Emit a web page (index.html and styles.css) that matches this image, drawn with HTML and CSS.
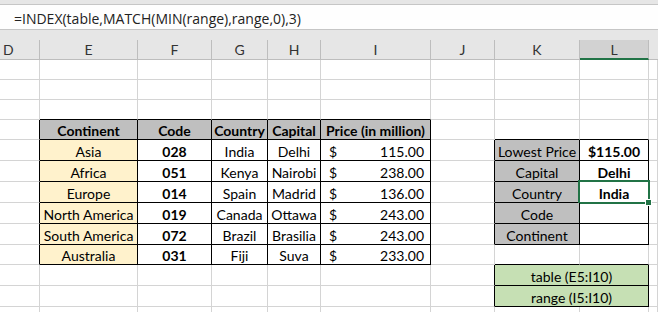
FILE: index.html
```html
<!DOCTYPE html>
<html>
<head>
<meta charset="utf-8">
<link rel="stylesheet" href="styles.css">
</head>
<body>
<div class="app">
  <div class="topbar">
    <div class="fbar"><span class="fx">=INDEX(table,MATCH(MIN(range),range,0),3)</span></div>
  </div>
  <div class="sheet">
    <div class="h hd">D</div><div class="h">E</div><div class="h">F</div><div class="h">G</div><div class="h">H</div><div class="h">I</div><div class="h">J</div><div class="h">K</div><div class="h hsel">L</div><div class="h hlast"></div>

    <div class="c"></div><div class="c"></div><div class="c"></div><div class="c"></div><div class="c"></div><div class="c"></div><div class="c"></div><div class="c"></div><div class="c"></div><div class="c"></div>
    <div class="c"></div><div class="c"></div><div class="c"></div><div class="c"></div><div class="c"></div><div class="c"></div><div class="c"></div><div class="c"></div><div class="c"></div><div class="c"></div>
    <div class="c"></div><div class="c bb"></div><div class="c bb"></div><div class="c bb"></div><div class="c bb"></div><div class="c bb"></div><div class="c"></div><div class="c"></div><div class="c"></div><div class="c"></div>

    <div class="c br"></div><div class="c t th">Continent</div><div class="c t th">Code</div><div class="c t th">Country</div><div class="c t th">Capital</div><div class="c t th">Price (in million)</div><div class="c"></div><div class="c bb"></div><div class="c bb"></div><div class="c"></div>

    <div class="c br"></div><div class="c t ct">Asia</div><div class="c t b">028</div><div class="c t">India</div><div class="c t">Delhi</div><div class="c t pr"><span>$</span><span>115.00</span></div><div class="c br"></div><div class="c t lab">Lowest Price</div><div class="c t b">$115.00</div><div class="c"></div>

    <div class="c br"></div><div class="c t ct">Africa</div><div class="c t b">051</div><div class="c t">Kenya</div><div class="c t">Nairobi</div><div class="c t pr"><span>$</span><span>238.00</span></div><div class="c br"></div><div class="c t lab">Capital</div><div class="c t b">Delhi</div><div class="c"></div>

    <div class="c br"></div><div class="c t ct">Europe</div><div class="c t b">014</div><div class="c t">Spain</div><div class="c t">Madrid</div><div class="c t pr"><span>$</span><span>136.00</span></div><div class="c br"></div><div class="c t lab">Country</div><div class="c t b sel">India<i class="handle"></i></div><div class="c"></div>

    <div class="c br"></div><div class="c t ct">North America</div><div class="c t b">019</div><div class="c t">Canada</div><div class="c t">Ottawa</div><div class="c t pr"><span>$</span><span>243.00</span></div><div class="c br"></div><div class="c t lab">Code</div><div class="c t"></div><div class="c"></div>

    <div class="c br"></div><div class="c t ct">South America</div><div class="c t b">072</div><div class="c t">Brazil</div><div class="c t">Brasilia</div><div class="c t pr"><span>$</span><span>243.00</span></div><div class="c br"></div><div class="c t lab">Continent</div><div class="c t"></div><div class="c"></div>

    <div class="c br"></div><div class="c t ct">Australia</div><div class="c t b">031</div><div class="c t">Fiji</div><div class="c t">Suva</div><div class="c t pr"><span>$</span><span>233.00</span></div><div class="c"></div><div class="c bb"></div><div class="c bb"></div><div class="c"></div>

    <div class="c"></div><div class="c"></div><div class="c"></div><div class="c"></div><div class="c"></div><div class="c"></div><div class="c br"></div><div class="c t g span2">table (E5:I10)</div><div class="c"></div>

    <div class="c"></div><div class="c"></div><div class="c"></div><div class="c"></div><div class="c"></div><div class="c"></div><div class="c br"></div><div class="c t g span2">range (I5:I10)</div><div class="c"></div>

    <div class="c"></div><div class="c"></div><div class="c"></div><div class="c"></div><div class="c"></div><div class="c"></div><div class="c"></div><div class="c"></div><div class="c"></div><div class="c"></div>
  </div>
</div>
</body>
</html>
```
FILE: styles.css
```css
html, body {
  margin: 0;
  padding: 0;
  background: #ffffff;
}
.app {
  width: 658px;
  height: 312px;
  overflow: hidden;
  font-family: Lato, "Liberation Sans", sans-serif;
  color: #000;
}
.topbar {
  height: 40px;
  box-sizing: border-box;
  background: #e6e6e6;
  padding-top: 4px;
}
.fbar {
  height: 26px;
  box-sizing: border-box;
  background: #fefefe;
  border-top: 1px solid #c6c6c6;
  border-bottom: 1px solid #c6c6c6;
  display: flex;
  align-items: center;
  padding-left: 14px;
  padding-top: 2px;
}
.fx {
  font-family: "Open Sans", sans-serif;
  font-size: 14px;
  color: #222;
}
.sheet {
  display: grid;
  grid-template-columns: 40px 98px 74px 56px 53px 110px 64px 85px 69px 9px;
  grid-template-rows: 20px 20px 20px 20px 20px 21px 21px 21px 21px 21px 20px 21px 21px 6px;
}
.h {
  background: #e6e6e6;
  border-right: 1px solid #bdbdbd;
  border-bottom: 1px solid #bdbdbd;
  display: flex;
  align-items: center;
  justify-content: center;
  font-size: 14px;
  color: #333;
}
.hd {
  justify-content: flex-start;
  padding-left: 3px;
}
.hsel {
  background: #d2d2d2;
  border-bottom: 2px solid #217346;
}
.hlast {
  border-right: none;
}
.c {
  border-right: 1px solid #d4d4d4;
  border-bottom: 1px solid #d4d4d4;
  display: flex;
  align-items: center;
  justify-content: center;
  font-size: 14px;
  white-space: nowrap;
  position: relative;
  padding-top: 2px;
  box-sizing: border-box;
}
.bb {
  border-bottom-color: #000;
}
.br {
  border-right-color: #000;
}
.t {
  border-right-color: #000;
  border-bottom-color: #000;
}
.th {
  background: #bfbfbf;
  font-weight: 700;
}
.lab {
  background: #bfbfbf;
}
.ct {
  background: #fff2cc;
}
.b {
  font-weight: 700;
}
.pr {
  justify-content: space-between;
  padding-left: 8px;
  padding-right: 6px;
}
.g {
  background: #c6e0b4;
}
.span2 {
  grid-column: span 2;
}
.sel::after {
  content: "";
  position: absolute;
  left: -2px;
  top: -2px;
  right: -2px;
  bottom: -2px;
  border: 2px solid #217346;
}
.handle {
  position: absolute;
  right: -4px;
  bottom: -4px;
  width: 5px;
  height: 5px;
  background: #217346;
  border: 1px solid #fff;
  z-index: 2;
}
```
